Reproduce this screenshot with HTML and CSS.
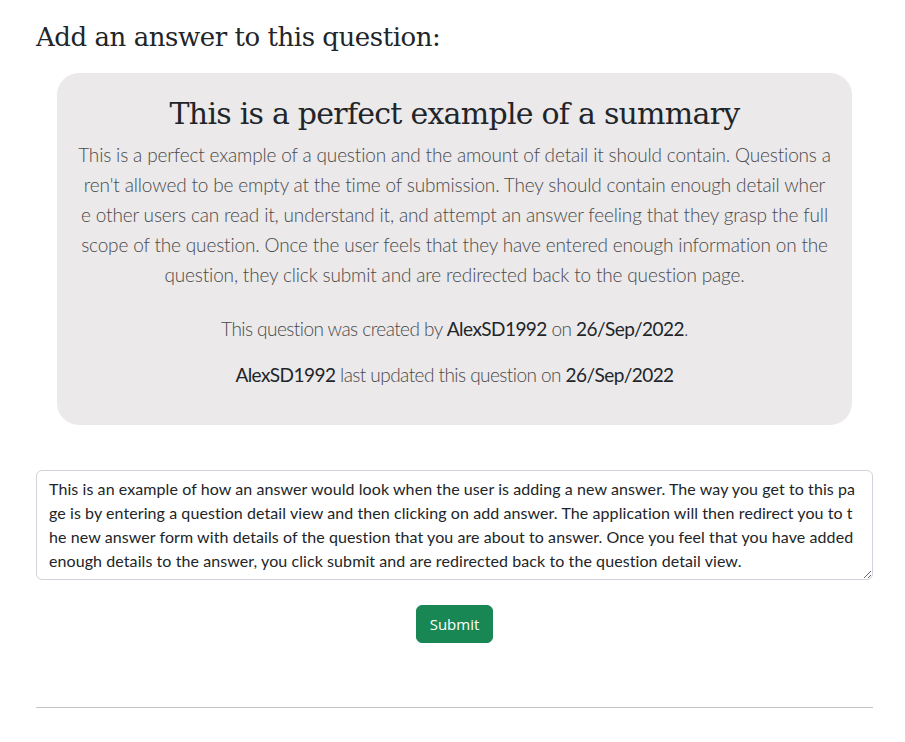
FILE: index.html
```html
<!DOCTYPE html>
<html lang="en">
<head>
<meta charset="utf-8">
<title>Add answer</title>
<link rel="stylesheet" href="styles.css">
</head>
<body>
<main class="page">
  <h3 class="page-title">Add an answer to this question:</h3>
  <section class="card">
    <h2 class="card-title">This is a perfect example of a summary</h2>
    <p class="card-body">This is a perfect example of a question and the amount of detail it should contain. Questions a<br>ren't allowed to be empty at the time of submission. They should contain enough detail wher<br>e other users can read it, understand it, and attempt an answer feeling that they grasp the full<br>scope of the question. Once the user feels that they have entered enough information on the<br>question, they click submit and are redirected back to the question page.</p>
    <p class="meta meta-created">This question was created by <b>AlexSD1992</b> on <b>26/Sep/2022</b>.</p>
    <p class="meta meta-updated"><b>AlexSD1992</b> last updated this question on <b>26/Sep/2022</b></p>
  </section>
  <form class="answer-form">
    <textarea class="answer-input" rows="4">This is an example of how an answer would look when the user is adding a new answer. The way you get to this pa
ge is by entering a question detail view and then clicking on add answer. The application will then redirect you to t
he new answer form with details of the question that you are about to answer. Once you feel that you have added
enough details to the answer, you click submit and are redirected back to the question detail view.</textarea>
    <div class="actions">
      <button type="button" class="btn-submit">Submit</button>
    </div>
  </form>
  <hr class="divider">
</main>
</body>
</html>
```

FILE: styles.css
```css
* { box-sizing: border-box; }
body {
  margin: 0;
  background: #fff;
  color: #212529;
  font-family: "Lato", "Open Sans", sans-serif;
}
.page {
  padding: 20px 32px 0 36px;
}
.page-title {
  margin: 0;
  font-family: "DejaVu Serif", serif;
  font-weight: 400;
  font-size: 26px;
  line-height: 34px;
  letter-spacing: -0.45px;
  color: #212529;
}
.card {
  margin: 19px 21px 0 21px;
  background: #ebe9ea;
  border-radius: 22px;
  padding: 22px 10px 35px;
  text-align: center;
}
.card-title {
  margin: 0 0 7px;
  font-family: "DejaVu Serif", serif;
  font-weight: 400;
  font-size: 30px;
  line-height: 38px;
  letter-spacing: -0.75px;
  color: #212529;
}
.card-body {
  margin: 0;
  font-size: 19px;
  line-height: 30px;
  font-weight: 300;
  letter-spacing: -0.16px;
  color: #4a4a4a;
  white-space: nowrap;
}
.meta {
  margin: 0;
  font-size: 19px;
  line-height: 30px;
  font-weight: 300;
  letter-spacing: -0.55px;
  color: #4a4a4a;
}
.meta b {
  font-weight: 400;
  color: #212529;
}
.meta-created { margin-top: 24px; }
.meta-updated { margin-top: 16px; }
.answer-form {
  margin-top: 45px;
}
.answer-input {
  display: block;
  width: 837px;
  height: 110px;
  padding: 6px 12px;
  border: 1px solid #ced4da;
  border-radius: 6px;
  font-family: "Lato", sans-serif;
  font-size: 16px;
  line-height: 24px;
  letter-spacing: 0.08px;
  color: #212529;
  resize: vertical;
  white-space: pre;
  overflow: hidden;
}
.actions {
  display: flex;
  justify-content: center;
  margin-top: 25px;
}
.btn-submit {
  background: #198754;
  color: #fff;
  border: 1px solid #198754;
  border-radius: 6px;
  padding: 0 12px;
  height: 38px;
  width: 77px;
  font-family: "Open Sans", sans-serif;
  font-size: 15px;
}
.divider {
  margin: 64px 0 0;
  width: 837px;
  border: 0;
  border-top: 1px solid #c4c4c4;
}
```
